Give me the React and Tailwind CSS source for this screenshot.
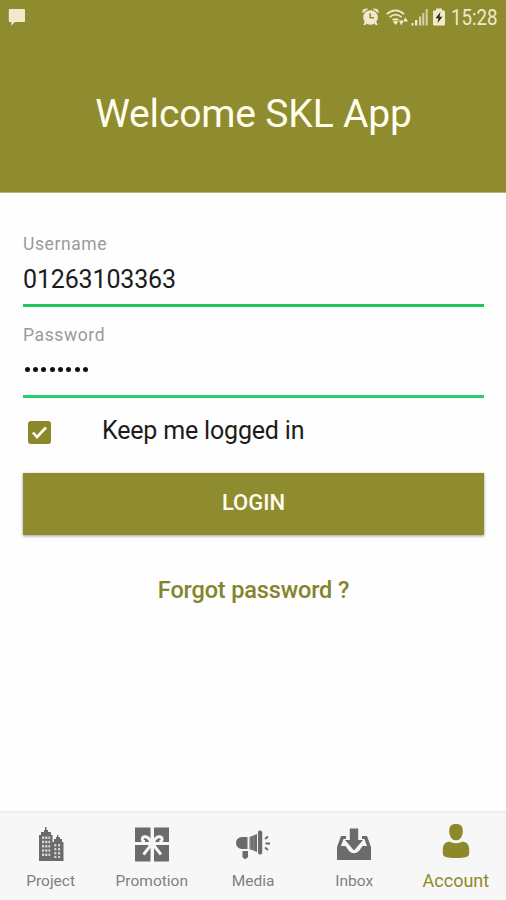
import React from "react";

function StatusBar() {
  return (
    <div className="flex h-9 items-start pt-[7px] pl-2 text-[#eeeacb]">
      <svg className="h-5 w-5" viewBox="0 0 20 20" fill="currentColor">
        <path d="M1.500 2H16a1 1 0 0 1 1 1v11a1 1 0 0 1-1 1H7l-4 3.800L3.500 15H1.500a1 1 0 0 1-.7-1V3a1 1 0 0 1 .7-1Z" />
      </svg>
      <svg className="ml-[334px] h-5 w-[17px]" viewBox="0 0 17 20" fill="currentColor">
        <circle cx="8.500" cy="10.500" r="7.300" />
        <path d="M.6 5.500 1.500 2.500 5.500 2zM16.400 5.500 15.500 2.500 11.500 2z" stroke="currentColor" strokeLinejoin="round" />
        <path d="m4 15-1.800 3M13 15l1.800 3" stroke="currentColor" strokeWidth="2.200" />
        <path d="M8.200 6.200v4.500H12" fill="none" stroke="#8f8c30" strokeWidth="1.500" />
      </svg>
      <svg className="ml-[7px] h-5 w-[23px]" viewBox="0 0 23 20" fill="none" stroke="currentColor">
        <path d="M.8 7.200Q9.500-.5 18.200 7.200M3.600 10.200q6-5 12 0M6.500 13.200q3-2.300 6 0" strokeWidth="1.700" />
        <path d="m7 15 2.600-1.800L12.200 15l-2.600 3z" fill="currentColor" stroke="none" />
        <path d="M12.800 13.500h5L15.300 18.500zM17 14.500h5l-2.500-4.200z" fill="currentColor" stroke="none" />
      </svg>
      <svg className="ml-[2px] h-5 w-[17px]" viewBox="0 0 17 20" fill="currentColor">
        <path d="M.5 16h2v2.500h-2zM4 13h2.300v5.500H4z" />
        <path d="M8 9.500h2.200v9H8zM11.300 6h2v12.500h-2zM14.700 2h2v16.500h-2z" opacity=".75" />
      </svg>
      <svg className="ml-[4px] h-5 w-[14px]" viewBox="0 0 14 20" fill="currentColor">
        <path d="M4 1.500h6v2h2a1 1 0 0 1 1 1v13a1 1 0 0 1-1 1H2a1 1 0 0 1-1-1v-13a1 1 0 0 1 1-1h2z" />
        <path d="M8.500 5 3.500 11.300h3L5.500 16l5-6.300h-3z" fill="#29280f" />
      </svg>
      <span className="ml-[5px] origin-left scale-x-[0.87] text-[21.500px] leading-[22px]">15:28</span>
    </div>
  );
}

function BuildingsIcon() {
  return (
    <svg className="h-9 w-9" viewBox="0 0 36 36" fill="#6b6b6b">
      <path d="M6 34V8h2V5h3V3h1V0h1.500v3H15v2h3v3h1.500v7H21v-3h2v-2h1V8h1.300v2H27v2h2v3h1.500v19z" />
      <path d="M9 9.500h2.200V12H9zm3.200 0h2.200V12h-2.200zm3.200 0h1.800V12h-1.800zM9 13.700h2.200v2.500H9zm3.200 0h2.200v2.500h-2.200zm3.200 0h1.800v2.500h-1.800zM9 18h2.200v2.500H9zm3.200 0h2.200v2.500h-2.200zm3.200 0h1.800v2.500h-1.800zM9 22.200h2.200v2.500H9zm3.200 0h2.200v2.500h-2.200zm3.200 0h1.800v2.500h-1.800zM9 26.500h2.200V29H9zm3.200 0h2.200V29h-2.200zm3.200 0h1.800V29h-1.800zM21.300 17h2v2.500h-2zm3.800 0h2v2.500h-2zm-3.800 4h2v2.500h-2zm3.800 0h2v2.500h-2zm-3.800 4h2v2.500h-2zm3.800 0h2v2.500h-2zm-3.800 4h2v2h-2zm3.800 0h2v2h-2z" fill="#d5d5d5" />
    </svg>
  );
}

function GiftIcon() {
  return (
    <svg className="h-9 w-9" viewBox="0 0 36 36">
      <path d="M1 .5h15.500V15H1zM20 .5h15V15H20zM1 18h15.500v16.500H1zM20 18h15v16.500H20z" fill="#6b6b6b" />
      <path
        d="M11 14.500C7 14.500 7.500 9.500 11.500 9.800c3.500.2 5 3.700 6.700 7.200 1.700-3.500 3.200-7 6.700-7.200 4-.3 4.500 4.700.5 4.700M18.200 16.500 9.500 27.500M18.200 16.500 27 27.500"
        fill="none"
        stroke="#f7f7f7"
        strokeWidth="2.900"
      />
      <circle cx="18.200" cy="17" r="4" fill="#f7f7f7" />
    </svg>
  );
}

function MegaphoneIcon() {
  return (
    <svg className="h-9 w-9" viewBox="0 0 36 36" fill="#6b6b6b">
      <path d="M12.500 10v12H6.500Q1 21 1 16t5.500-6zM14.500 10l7.500-3v18l-7.500-3z" />
      <path d="M15.800 9.500v13M18.800 8.500v15" stroke="#999" strokeWidth=".8" />
      <rect x="23" y="3.500" width="4.200" height="24" rx="1.800" />
      <path d="M7.500 24H13v6q-3 4-5.500 0z" />
      <path d="m30 12 3-2.500M30.500 16.500H35M30 20.500l3 2.500" fill="none" stroke="#6b6b6b" strokeWidth="1.800" />
    </svg>
  );
}

function InboxIcon() {
  return (
    <svg className="h-9 w-9" viewBox="0 0 36 36" fill="#6b6b6b">
      <path d="M1 20 5 9h5v3H7.500L5 19h4.500l3.500 5q5 4.500 10 0l3.500-5H31l-2.500-7H26V9h5l4 11v13H1z" />
      <path d="M13.800 1.500h8.400V13H27l-9 10.500L9 13h4.800z" />
    </svg>
  );
}

function PersonIcon() {
  return (
    <svg className="h-9 w-9" viewBox="0 0 36 36" fill="#8c892a">
      <path d="M18 1c5 0 6.800 2.500 6.800 7.200 0 5-2.700 9.100-6.800 9.100s-6.800-4.100-6.800-9.100C11.200 3.500 13 1 18 1Z" />
      <path d="M11.500 18.500c4 2.300 9 2.300 13 0 5 .7 6.700 4 6.700 8.500 0 3 .2 5.500-1.600 6.500-5 2-18.200 2-23.200 0-1.800-1-1.600-3.500-1.600-6.500 0-4.500 1.700-7.800 6.700-8.500Z" />
    </svg>
  );
}

const tabs = [
  { label: "Project", Icon: BuildingsIcon },
  { label: "Promotion", Icon: GiftIcon },
  { label: "Media", Icon: MegaphoneIcon },
  { label: "Inbox", Icon: InboxIcon },
];

export default function App() {
  return (
    <div className="flex h-[900px] w-[506px] flex-col overflow-hidden bg-[#fefefe] font-['Roboto',sans-serif]">
      <header className="h-[193px] shrink-0 border-b border-[#b5b37a] bg-[#8f8c30]">
        <StatusBar />
        <h1 className="mt-[54px] pl-px text-center text-[39px] leading-[48px] font-normal tracking-[-0.150px] whitespace-nowrap text-[#fffdec]">
          Welcome SKL App
        </h1>
      </header>

      <main className="flex flex-1 flex-col pt-[38px] pr-[22px] pl-[23px]">
        <div className="flex h-[76px] flex-col border-b-[3px] border-[#1ec65c]">
          <label className="text-[17.500px] leading-[26px] tracking-[0.6px] text-[#9a9a9a]">Username</label>
          <span className="mt-[8px] text-[25px] leading-[30px] tracking-[-0.150px] text-[#1c1c1c]">01263103363</span>
        </div>
        <div className="mt-[15px] flex h-[76px] flex-col border-b-[3px] border-[#2bcb70]">
          <label className="text-[17.500px] leading-[26px] tracking-[0.6px] text-[#9a9a9a]">Password</label>
          <div className="mt-[19px] ml-[1.500px] flex gap-[3.400px]">
            {Array.from({ length: 8 }, (_, i) => (
              <span key={i} className="h-[5px] w-[5px] rounded-full bg-[#111]" />
            ))}
          </div>
        </div>

        <div className="mt-[16px] flex h-9 items-center pl-[5px]">
          <span className="flex h-[23px] w-[23px] items-center justify-center rounded-[3px] bg-[#8b8829]">
            <svg className="h-[17px] w-[17px]" viewBox="0 0 17 17" fill="none" stroke="#fffef2" strokeWidth="2.600">
              <path d="m2 8.500 4 4.500 9-9.500" />
            </svg>
          </span>
          <span className="ml-[51px] pb-[2px] text-[25px] leading-[34px] tracking-[-0.180px] whitespace-nowrap text-[#1c1c1c]">
            Keep me logged in
          </span>
        </div>

        <button className="mt-[23px] h-[62px] bg-[#8f8c30] pb-[3px] text-[22px] font-medium text-[#fffdec] shadow-[0_1px_3px_rgba(0,0,0,0.4)]">
          LOGIN
        </button>
        <a className="mt-[39px] self-center text-[23.500px] leading-8 font-medium tracking-[-0.150px] whitespace-nowrap text-[#83852a]">
          Forgot password ?
        </a>
      </main>

      <nav className="grid h-[89px] grid-cols-5 border-t-2 border-[#eeeeee] bg-[#f7f7f7]">
        {tabs.map(({ label, Icon }) => (
          <div key={label} className="flex flex-col items-center pt-[14px]">
            <Icon />
            <span className="mt-[8px] text-[15.500px] leading-[21px] text-[#808080]">{label}</span>
          </div>
        ))}
        <div className="flex flex-col items-center pt-[10px] pl-px">
          <PersonIcon />
          <span className="mt-[9px] text-[18px] leading-[26px] text-[#8c892a]">Account</span>
        </div>
      </nav>
    </div>
  );
}
